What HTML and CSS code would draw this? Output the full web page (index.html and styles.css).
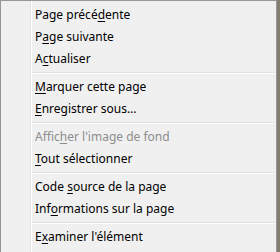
FILE: index.html
```html
<!DOCTYPE html>
<html lang="fr">
<head>
    <meta charset="UTF-8">
    <title>Menu contextuel</title>
    <link rel="stylesheet" href="styles.css">
</head>
<body>
    <div class="menu">
        <div class="item">Page précé<u>d</u>ente</div>
        <div class="item">P<u>a</u>ge suivante</div>
        <div class="item">A<u>c</u>tualiser</div>
        <div class="sep"></div>
        <div class="item"><u>M</u>arquer cette page</div>
        <div class="item"><u>E</u>nregistrer sous...</div>
        <div class="sep"></div>
        <div class="item disabled">Affic<u>h</u>er l'image de fond</div>
        <div class="item"><u>T</u>out sélectionner</div>
        <div class="sep"></div>
        <div class="item">Code <u>s</u>ource de la page</div>
        <div class="item">Inf<u>o</u>rmations sur la page</div>
        <div class="sep"></div>
        <div class="item">E<u>x</u>aminer l'élément</div>
    </div>
</body>
</html>
```

FILE: styles.css
```css
html, body {
    overflow: hidden;
}
body {
    margin: 0;
    width: 280px;
    height: 252px;
    background-color: #f0f0f0;
    font-family: "Noto Sans", "Open Sans", sans-serif;
    font-size: 12px;
    color: #000;
}
.menu {
    box-sizing: border-box;
    width: 277px;
    height: 258px;
    padding: 3px 2px;
    border: 1px solid #979797;
    background-color: #f0f0f0;
    background-image: linear-gradient(to right, transparent 29px, #e2e3e3 29px, #e2e3e3 30px, #fff 30px, #fff 31px, transparent 31px);
    box-shadow: 3px 0 0 #857d70;
}
.item {
    height: 22px;
    line-height: 22px;
    padding-left: 32px;
    white-space: nowrap;
}
.item u {
    text-underline-offset: 2px;
}
.disabled {
    color: #8d8d8d;
}
.sep {
    height: 6px;
    margin-left: 29px;
    display: flex;
    flex-direction: column;
    justify-content: center;
}
.sep::before {
    content: "";
    display: block;
    height: 1px;
    background-color: #e0e0e0;
    border-bottom: 1px solid #fff;
}
```
